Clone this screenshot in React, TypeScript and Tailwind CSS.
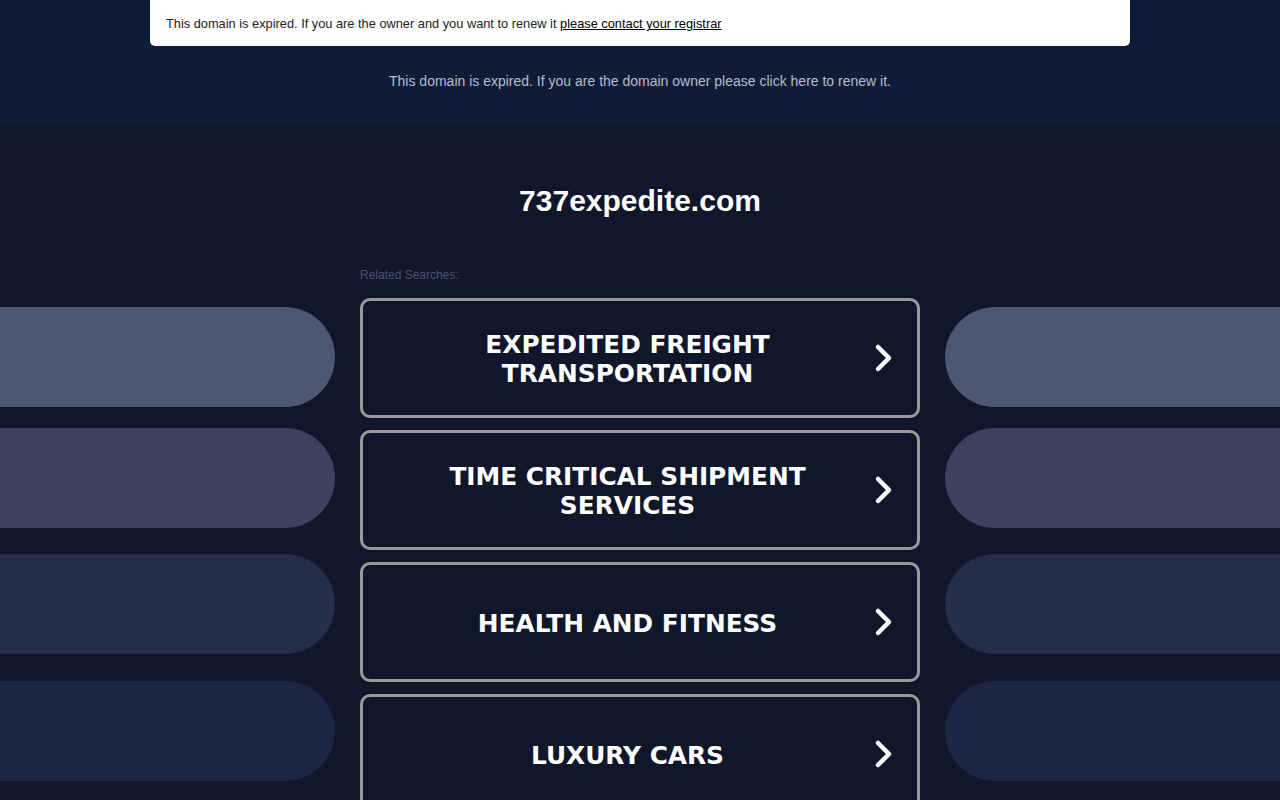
const searches = [
  ["EXPEDITED FREIGHT", "TRANSPORTATION"],
  ["TIME CRITICAL SHIPMENT", "SERVICES"],
  ["HEALTH AND FITNESS"],
  ["LUXURY CARS"],
];

function Pills({ side }: { side: "left" | "right" }) {
  const round = side === "left" ? "rounded-r-[50px]" : "rounded-l-[50px]";
  return (
    <div className="flex w-[335px] shrink-0 flex-col pt-[183px]">
      <div className={`h-[100px] bg-[#4d5672] ${round}`} />
      <div className={`mt-[21px] h-[100px] bg-[#3a4260] ${round}`} />
      <div className={`mt-[26px] h-[100px] bg-[#262e4d] ${round}`} />
      <div className={`mt-[27px] h-[100px] bg-[#1d2546] ${round}`} />
    </div>
  );
}

function Chevron() {
  return (
    <svg width="22" height="30" viewBox="0 0 22 30" className="absolute right-[22px] top-1/2 -translate-y-1/2">
      <polyline
        points="5,4 16,15 5,26"
        fill="none"
        stroke="white"
        strokeWidth="4.5"
        strokeLinecap="round"
        strokeLinejoin="round"
      />
    </svg>
  );
}

export default function App() {
  return (
    <div className="h-[800px] overflow-hidden bg-[#11172b] font-['Liberation_Sans',Arial,sans-serif]">
      {/* Expired banner */}
      <div className="h-[124px] bg-[#0f1c38]">
        <div className="mx-auto flex h-[46px] w-[980px] items-center rounded-b-[5px] bg-white px-4 pt-[2px] text-[12.8px] text-[#222]">
          <span>
            This domain is expired. If you are the owner and you want to renew it{" "}
            <a href="#" className="text-black underline">please contact your registrar</a>
          </span>
        </div>
        <p className="mt-[25px] text-center text-[14px] text-[#b4bdd0]">
          This domain is expired. If you are the domain owner please click here to renew it.
        </p>
      </div>

      <div className="flex">
        <Pills side="left" />

        <div className="mx-[25px] flex w-[560px] shrink-0 flex-col">
          <h1 className="mt-[60px] text-center text-[30px] leading-[34px] font-bold text-white">737expedite.com</h1>
          <p className="mt-[50px] text-[12px] leading-[14px] text-[#4a5577]">Related Searches:</p>
          <div className="mt-[16px] flex flex-col gap-3">
            {searches.map((lines) => (
              <a
                key={lines.join(" ")}
                href="#"
                className="relative flex h-[120px] flex-col items-center justify-center rounded-[10px] border-[3px] border-[#9a9a9a] pt-[2px] pl-5 pr-[45px] text-center font-['DejaVu_Sans',Verdana,sans-serif] text-[24.8px] leading-[29px] font-bold text-white"
              >
                {lines.map((l) => (
                  <span key={l}>{l}</span>
                ))}
                <Chevron />
              </a>
            ))}
          </div>
        </div>

        <Pills side="right" />
      </div>
    </div>
  );
}
